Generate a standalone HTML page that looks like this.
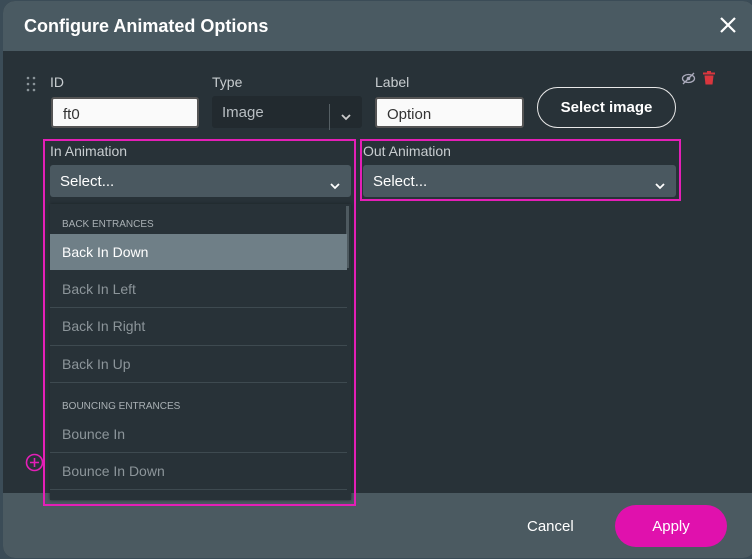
<!DOCTYPE html>
<html><head><meta charset="utf-8"><style>
*{margin:0;padding:0;box-sizing:border-box}
body{width:752px;height:559px;background:#3b4c57;font-family:"Liberation Sans",sans-serif;position:relative;overflow:hidden}
.dlg{position:absolute;left:3px;top:1px;width:752px;height:557px;background:#283238;border-radius:12px;overflow:hidden}
.hdr{position:absolute;left:0;top:0;right:0;height:50px;background:#4a5a62}
.ftr{position:absolute;left:0;top:492px;right:0;height:70px;background:#4b5a61}
.a{position:absolute}
.lbl{font-size:14px;color:#c8cdd0}
.inp{background:#fafafa;border:2px solid #555;border-radius:3px;font-size:15px;color:#333;padding:6px 10px}
.it{position:absolute;left:50px;width:297px;font-size:14px;color:#8c959a;padding-left:12px;border-bottom:1px solid #3e4a50}
.cap{position:absolute;left:62px;font-size:10px;color:#a9b0b4}
</style></head><body>
<div class="dlg">
<div class="hdr"></div>
<div class="ftr"></div>
</div>
<div class="a" style="left:24px;top:16px;font-size:18px;font-weight:bold;color:#fff">Configure Animated Options</div>
<svg class="a" style="left:719px;top:16px" width="18" height="18"><path d="M2 2L16 16M16 2L2 16" stroke="#fff" stroke-width="2.2"/></svg>
<svg class="a" style="left:25px;top:76px" width="12" height="16" fill="#8a9499"><circle cx="3" cy="2" r="1.3"/><circle cx="9" cy="2" r="1.3"/><circle cx="3" cy="8" r="1.3"/><circle cx="9" cy="8" r="1.3"/><circle cx="3" cy="14" r="1.3"/><circle cx="9" cy="14" r="1.3"/></svg>
<div class="a lbl" style="left:50px;top:74px">ID</div>
<div class="a inp" style="left:51px;top:97px;width:148px;height:31px;padding-top:7px">ft0</div>
<div class="a lbl" style="left:212px;top:74px">Type</div>
<div class="a" style="left:212px;top:96px;width:150px;height:32px;background:#222a2f;border-radius:3px;color:#b8bec2;font-size:15px;padding:8px 10px">Image</div>
<div class="a" style="left:329px;top:104px;width:1px;height:26px;background:#555f64"></div>
<svg class="a" style="left:340px;top:113px" width="12" height="8"><path d="M2 2L6 6L10 2" stroke="#ccc" stroke-width="1.8" fill="none"/></svg>
<div class="a lbl" style="left:375px;top:74px">Label</div>
<div class="a inp" style="left:375px;top:97px;width:149px;height:31px;padding-top:7px">Option</div>
<div class="a" style="left:537px;top:87px;width:139px;height:41px;border:1.5px solid #e8e8e8;border-radius:21px;color:#fff;font-size:15px;font-weight:bold;text-align:center;line-height:39px">Select image</div>
<svg class="a" style="left:681px;top:72px" width="15" height="13"><ellipse cx="7.5" cy="6.5" rx="6" ry="4" stroke="#aab" stroke-width="1.3" fill="none"/><circle cx="7.5" cy="6.5" r="1.8" fill="#aab"/><path d="M2 12L13 1" stroke="#aab" stroke-width="1.3"/></svg>
<svg class="a" style="left:703px;top:71px" width="12" height="14"><rect x="0" y="1.5" width="12" height="2" fill="#d9363e"/><rect x="4" y="0" width="4" height="2" fill="#d9363e"/><path d="M1.5 4.5h9l-1 9h-7z" fill="#d9363e"/></svg>
<div class="a" style="left:43px;top:139px;width:313px;height:367px;border:2px solid #e41fb7"></div>
<div class="a" style="left:360px;top:139px;width:321px;height:62px;border:2px solid #e41fb7"></div>
<div class="a lbl" style="left:50px;top:143px">In Animation</div>
<div class="a" style="left:50px;top:165px;width:301px;height:32px;background:#4a5860;border-radius:3px;color:#fff;font-size:15px;padding:8px 10px">Select...</div>
<svg class="a" style="left:329px;top:182px" width="12" height="8"><path d="M2 2L6 6L10 2" stroke="#fff" stroke-width="1.8" fill="none"/></svg>
<div class="a lbl" style="left:363px;top:143px">Out Animation</div>
<div class="a" style="left:363px;top:165px;width:313px;height:32px;background:#4a5860;border-radius:3px;color:#fff;font-size:15px;padding:8px 10px">Select...</div>
<svg class="a" style="left:654px;top:182px" width="12" height="8"><path d="M2 2L6 6L10 2" stroke="#fff" stroke-width="1.8" fill="none"/></svg>
<div class="a" style="left:50px;top:204px;width:301px;height:296px;background:#283238;box-shadow:0 0 3px #1a2226"></div>
<div class="a" style="left:346px;top:206px;width:3px;height:62px;background:#4e5a60"></div>
<div class="cap" style="top:219px">BACK ENTRANCES</div>
<div class="a" style="left:50px;top:234px;width:297px;height:36px;background:#6f7f87;color:#fff;font-size:14px;padding:10px 12px">Back In Down</div>
<div class="it" style="top:271px;height:37px;line-height:37px">Back In Left</div>
<div class="it" style="top:308px;height:38px;line-height:37px">Back In Right</div>
<div class="it" style="top:346px;height:37px;line-height:37px">Back In Up</div>
<div class="cap" style="top:401px">BOUNCING ENTRANCES</div>
<div class="it" style="top:416px;height:37px;line-height:37px;border-top:none">Bounce In</div>
<div class="it" style="top:453px;height:37px;line-height:37px">Bounce In Down</div>
<svg class="a" style="left:25px;top:453px" width="19" height="19"><circle cx="9.5" cy="9.5" r="8" stroke="#e41fb7" stroke-width="1.6" fill="none"/><path d="M9.5 5v9M5 9.5h9" stroke="#e41fb7" stroke-width="1.6"/></svg>
<div class="a" style="left:527px;top:518px;color:#fff;font-size:15px">Cancel</div>
<div class="a" style="left:615px;top:505px;width:112px;height:42px;background:#e011ad;border-radius:21px;color:#fff;font-size:15px;text-align:center;line-height:44px">Apply</div>
</body></html>
